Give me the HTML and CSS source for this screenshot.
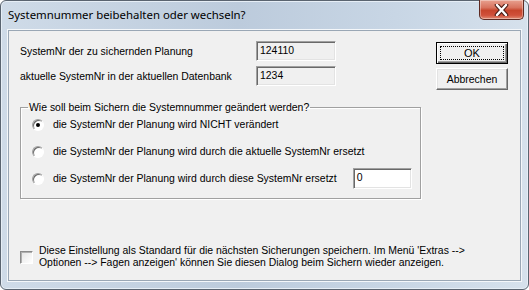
FILE: index.html
```html
<!DOCTYPE html>
<html lang="de">
<head>
  <meta charset="UTF-8">
  <title>Systemnummer beibehalten oder wechseln?</title>
  <link rel="stylesheet" href="styles.css">
</head>
<body>

  <div class="window">
    <div class="titlebar">
      <span class="title">Systemnummer beibehalten oder wechseln?</span>
      <div class="close">
        <svg width="17" height="12" viewBox="0 0 17 12">
          <path d="M4 1 L13 11 M13 1 L4 11" stroke="#4a1d16" stroke-width="4.5" stroke-linecap="round"/>
          <path d="M4 1 L13 11 M13 1 L4 11" stroke="#fff" stroke-width="2.4" stroke-linecap="round"/>
        </svg>
      </div>
    </div>

    <div class="client">
      <div class="top">
        <div class="fields">
          <div class="row">
            <span class="label">SystemNr der zu sichernden Planung</span>
            <span class="edit readonly">124110</span>
          </div>
          <div class="row">
            <span class="label">aktuelle SystemNr in der aktuellen Datenbank</span>
            <span class="edit readonly">1234</span>
          </div>
        </div>
        <div class="buttons">
          <button class="btn default"><span class="focus">OK</span></button>
          <button class="btn">Abbrechen</button>
        </div>
      </div>

      <fieldset class="group">
        <legend>Wie soll beim Sichern die Systemnummer geändert werden?</legend>
        <div class="option"><span class="radio checked"></span>die SystemNr der Planung wird NICHT verändert</div>
        <div class="option"><span class="radio"></span>die SystemNr der Planung wird durch die aktuelle SystemNr ersetzt</div>
        <div class="option"><span class="radio"></span>die SystemNr der Planung wird durch diese SystemNr ersetzt<span class="edit new">0</span></div>
      </fieldset>

      <div class="remember">
        <span class="check"></span>
        <span class="remember-text">Diese Einstellung als Standard für die nächsten Sicherungen speichern. Im Menü 'Extras --><br>Optionen --> Fagen anzeigen' können Sie diesen Dialog beim Sichern wieder anzeigen.</span>
      </div>
    </div>
  </div>

</body>
</html>
```

FILE: styles.css
```css
body { margin: 0; background: #fff; }

.window { width: 529px; height: 290px; box-sizing: border-box; border: 1px solid #5a6470; border-radius: 6px; background: linear-gradient(90deg, #cfdbe8 0%, #bccbdc 45%, #c8d6e5 75%, #d6e1ec 100%); padding: 0 7px 8px 7px; display: flex; flex-direction: column; box-shadow: inset 0 0 0 1px #e6eef6; }

.titlebar { height: 29px; display: flex; align-items: flex-start; position: relative; }
.title { font-family: "Noto Sans", sans-serif; font-size: 11.4px; color: #000; margin-top: 6px; }
.close { position: absolute; right: -3px; top: -1px; width: 43px; height: 19px; border: 1px solid #5e2a22; border-top: none; border-radius: 0 0 5px 5px; background: linear-gradient(#e8a190 0%, #d8735e 40%, #c7452c 55%, #d0503a 80%, #e08b73 100%); display: flex; align-items: center; justify-content: center; box-shadow: inset 0 0 0 1px rgba(255,255,255,0.35); }

.client { flex: 1; background: #f0f0f0; border: 1px solid #9aa7b5; box-shadow: 0 0 0 1px #f4f7fa; font-family: "Liberation Sans", Arial, sans-serif; font-size: 10.45px; color: #000; padding: 10px 11px 0 11px; }

.top { display: flex; }
.fields { display: flex; flex-direction: column; gap: 5px; }
.row { display: flex; align-items: center; height: 20px; }
.label { width: 236px; }

.edit { box-sizing: border-box; height: 20px; border: 1px solid; border-color: #a0a0a0 #fff #fff #a0a0a0; box-shadow: inset 1px 1px #696969, inset -1px -1px #e3e3e3; padding: 3px 0 0 3px; }
.readonly { width: 80px; background: #f0f0f0; }
.new { width: 59px; height: 21px; background: #fff; margin-left: 16px; }

.buttons { margin-left: auto; margin-right: 1px; margin-top: 1px; display: flex; flex-direction: column; gap: 4px; }
.btn { box-sizing: border-box; width: 72px; height: 22px; background: #f0f0f0; font-family: "Liberation Sans", Arial, sans-serif; font-size: 10.45px; color: #000; border: 1px solid; border-color: #fff #696969 #696969 #fff; box-shadow: inset -1px -1px #a0a0a0, inset 1px 1px #e3e3e3; padding: 0; }
.default { border: 1px solid #000; box-shadow: inset 1px 1px #fff, inset -1px -1px #696969, inset -2px -2px #a0a0a0; padding: 3px; font-size: 11px; }
.focus { display: block; height: 100%; box-sizing: border-box; border: 1px dotted #000; line-height: 12px; }

.group { margin: 12px 0 0 0; width: 401px; height: 97px; box-sizing: border-box; border: 1px solid #a0a0a0; box-shadow: inset 1px 1px #fff, 1px 1px #fff; padding: 1px 0 0 11px; }
.group legend { padding: 0 1px; margin-left: -4px; }
.option { display: flex; align-items: center; height: 21px; margin-bottom: 6px; white-space: nowrap; }

.radio { box-sizing: border-box; width: 12px; height: 12px; border-radius: 50%; border: 1px solid; border-color: #a0a0a0 #fff #fff #a0a0a0; background: #fff; box-shadow: inset 1px 1px #696969; margin-right: 9px; display: flex; align-items: center; justify-content: center; }
.checked::after { content: ""; width: 4px; height: 4px; border-radius: 50%; background: #000; }

.remember { display: flex; align-items: center; margin-top: 46px; }
.check { box-sizing: border-box; width: 13px; height: 13px; border: 1px solid; border-color: #8a8a8a #fff #fff #8a8a8a; background: linear-gradient(135deg, #e4e4e4, #fff); box-shadow: inset 1px 1px #b0b0b0; margin-right: 6px; flex-shrink: 0; }
.remember-text { line-height: 12px; }
```
